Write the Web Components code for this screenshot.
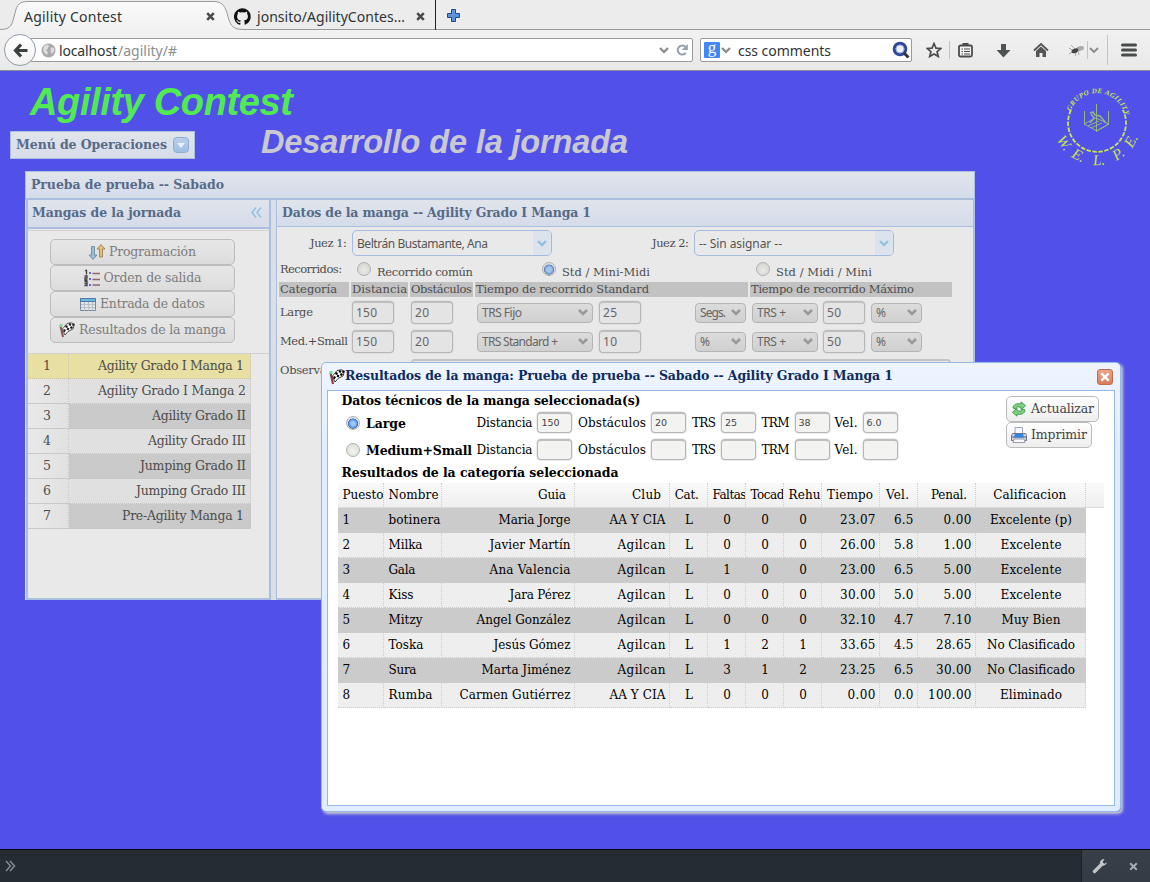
<!DOCTYPE html>
<html lang="es">
<head>
<meta charset="utf-8">
<title>Agility Contest</title>
<style>
html,body{margin:0;height:100%}
body{width:1150px;height:882px;overflow:hidden;display:flex;flex-direction:column;background:#5151ea;font:12px/16px "DejaVu Serif",serif;color:#000}
</style>
</head>
<body>
<browser-chrome></browser-chrome>
<contest-page></contest-page>
<dev-bar></dev-bar>
<script>
const define = (name, css, html) => {
  const tpl = document.createElement('template');
  const isFn = typeof html === 'function';
  if (!isFn) tpl.innerHTML = `<style>${css}</style>${html}`;
  customElements.define(name, class extends HTMLElement {
    connectedCallback() {
      if (this.shadowRoot) return;
      const root = this.attachShadow({mode: 'open'});
      if (isFn) root.innerHTML = `<style>${css}</style>${html(this)}`;
      else root.append(tpl.content.cloneNode(true));
    }
  });
};
/* text set to a given width */
const t = (w, s, css = '') => `<fit-text w="${w}" style="${css}">${s}</fit-text>`;
const chev = (c, w = 2.2, s = 10) => `<svg width="${s}" height="8" viewBox="0 0 10 8"><path d="M1 2l4 4 4-4" fill="none" stroke="${c}" stroke-width="${w}"/></svg>`;
const X = (s, c, w) => `<svg width="${s}" height="${s}" viewBox="0 0 9 9" style="display:block"><path d="M1.2 1.2l6.6 6.6M7.8 1.2L1.2 7.8" stroke="${c}" stroke-width="${w}"/></svg>`;

/* ---------- browser ---------- */
define('browser-tabs', `
:host{display:block;position:relative;height:30px;background:#ececec;font:14px/20px "Noto Sans",sans-serif;color:#2e3436}
.bg{position:absolute;left:0;top:0}
.row{position:relative;display:flex;align-items:center;height:30px;padding:4px 0 0 24px;box-sizing:border-box}
.sep{width:1px;height:30px;background:#222;margin:-4px 0 0 10px}
`, `
<svg class="bg" width="1150" height="30"><defs><linearGradient id="g" x2="0" y2="1"><stop offset="0" stop-color="#fafafa"/><stop offset="1" stop-color="#f1f1f1"/></linearGradient></defs>
<path d="M0 29.5C12 29.5 12 24 15 13C17 4 20 1.500 28 1.500H213C221 1.500 224 4 227 13C230 24 231 29.500 243 29.500V31H0z" fill="url(#g)"/>
<path d="M0 29.500C12 29.500 12 24 15 13C17 4 20 1.500 28 1.500H213C221 1.500 224 4 227 13C230 24 231 29.500 243 29.500H1150" fill="none" stroke="#9a9a9a"/></svg>
<div class="row">${t(98,'Agility Contest')}
<span style="margin:-2px 0 0 84px">${X(9,'#4a4c4a',2.6)}</span>
<svg style="margin:-2px 0 0 19px" width="17" height="17" viewBox="0 0 16 16"><path fill="#111" d="M8 .2a8 8 0 0 0-2.500 15.600c.4.100.500-.2.500-.4v-1.500c-2.200.500-2.700-.9-2.700-.9-.4-.9-.9-1.200-.9-1.200-.7-.5.1-.5.1-.5.8.1 1.200.8 1.200.8.7 1.200 1.900.9 2.300.7.1-.5.3-.9.500-1.100-1.800-.2-3.600-.9-3.600-4 0-.9.3-1.600.8-2.100-.1-.2-.4-1 .1-2.100 0 0 .7-.2 2.200.8a7.500 7.500 0 0 1 4 0c1.500-1 2.200-.8 2.200-.8.4 1.100.2 1.900.1 2.100.5.600.8 1.300.8 2.100 0 3.100-1.900 3.700-3.700 3.900.3.300.600.800.600 1.500v2.200c0 .2.100.500.500.4A8 8 0 0 0 8 .2z"/></svg>
<span style="margin-left:6px">${t(148,'jonsito/AgilityContes...')}</span>
<span style="margin:-2px 0 0 11px">${X(9,'#4a4c4a',2.6)}</span>
<span class="sep"></span>
<svg style="margin:-4px 0 0 11px" width="13" height="13"><path d="M4.500.5h4v4h4v4h-4v4h-4v-4h-4v-4h4z" fill="#5d92d6" stroke="#204a87"/></svg></div>`);

define('browser-toolbar', `
:host{display:block;height:41px;box-sizing:border-box;border-bottom:1px solid #8d8d99;background:linear-gradient(#f1f1f1,#e9e9e9);font:14px/20px "Noto Sans",sans-serif;color:#2e3436}
.row{display:flex;align-items:center;height:40px}
.back{width:30px;height:30px;border:1px solid #8e9bab;border-radius:50%;background:linear-gradient(#fff,#f2f2f2);margin-left:4px;z-index:1;display:flex;align-items:center;justify-content:center}
.url,.search{height:24px;box-sizing:border-box;border:1px solid #9a9a9a;background:#fff;border-radius:2px;display:flex;align-items:center}
.url{width:663px;margin-left:-6px;padding-left:10px}.search{width:212px;margin-left:7px;padding-left:3px}
.t{padding-top:2px;display:flex}
svg{display:block;flex:none}.s{width:1px;height:18px;background:#c3c3c3;flex:none}
.g{width:16px;height:16px;background:#4387fd;color:#fff;border-radius:1px;font:17px/11px "Liberation Serif",serif;text-align:center}
`, `
<div class="row"><div class="back"><svg width="15" height="15"><path d="M8 1.500L2.500 7.500 8 13.500M3 7.500h11.500" fill="none" stroke="#3c403f" stroke-width="3.200"/></svg></div>
<div class="url"><svg width="15" height="15"><circle cx="7.500" cy="7.500" r="7" fill="#a9a9a9"/><path d="M3 3l3-1.500 2 1-1 3-2 1.500 2 2-1 3-2.500-2L2 7zM10 4l3 1 .5 3-3 3-1-3z" fill="#ddd"/></svg>
<span class="t" style="margin-left:3px">${t(58,'localhost')}${t(59,'/agility/#','margin-left:1px;color:#8b8e8f')}</span>
<span style="margin-left:482px">${chev('#8a8a8a')}</span>
<svg style="margin-left:7px" width="13" height="14" viewBox="0 0 13 14"><path d="M9.800 9.800A4.500 4.500 0 1 1 9.500 4" fill="none" stroke="#94a0ac" stroke-width="2"/><path d="M11.800 1v6h-6z" fill="#94a0ac"/></svg></div>
<div class="search"><span class="g">g</span><span style="margin-left:1px">${chev('#8a8a8a')}</span>
<span class="t" style="margin-left:7px">${t(93,'css comments')}</span>
<svg style="margin-left:61px" width="18" height="18"><circle cx="8" cy="8" r="5.800" fill="#eef2fb" stroke="#2e479a" stroke-width="3"/><circle cx="8" cy="8" r="4" fill="none" stroke="#93a8de"/><path d="M12 12l4.500 4.500" stroke="#333" stroke-width="3"/></svg></div>
<svg style="margin-left:14px" width="16" height="16" viewBox="0 0 16 16"><path d="M8 1.500l2 4.600 4.800.4-3.700 3.200 1.200 4.800L8 12l-4.300 2.500 1.200-4.800L1.200 6.500 6 6.100z" fill="none" stroke="#4a4d4c" stroke-width="1.700"/></svg>
<span class="s" style="margin-left:7px"></span>
<svg style="margin-left:8px" width="15" height="16"><rect x="1" y="3.500" width="13" height="11" rx="1.500" fill="#f4f4f4" stroke="#4a4d4c" stroke-width="1.800"/><path d="M4.500 1h6v3h-6z" fill="#4a4d4c"/><path d="M3.500 7H5M6 7h6M3.500 9.500H5M6 9.500h6M3.500 12H5M6 12h6" stroke="#4a4d4c" stroke-width="1.100"/></svg>
<svg style="margin-left:23px" width="15" height="15"><path d="M5 1h5v6h4.500l-7 7.500-7-7.500H5z" fill="#4f5351"/></svg>
<svg style="margin-left:22px" width="16" height="16"><path d="M1 8.500L8 2l7 6.500" fill="none" stroke="#555" stroke-width="1.800"/><path d="M3 9l5-4.600L13 9v6H9.500v-4h-3v4H3z" fill="#555"/></svg>
<svg style="margin-left:19px" width="16" height="15"><g stroke="#aaa" stroke-width="1"><path d="M1 5l5 3M1 11l5-3M7 13l2-6M11 12l-1-5M3 2l4 4"/></g><ellipse cx="12" cy="5.500" rx="4" ry="2.300" fill="#aaa" transform="rotate(-15 12 5)"/><ellipse cx="7" cy="7.800" rx="3.500" ry="2.200" fill="#444" transform="rotate(-20 7 8)"/></svg>
<span class="s" style="margin-left:3px"></span><span style="margin-left:1px">${chev('#8a8a8a',1.8)}</span>
<span class="s" style="margin-left:8px;height:30px"></span>
<svg style="margin-left:13px" width="16" height="14"><path d="M1.500 2h13M1.500 7h13M1.500 12h13" stroke="#484c4b" stroke-width="3" stroke-linecap="round"/></svg>
</div>`);

define('browser-chrome', `:host{display:block;flex:none;height:71px}`, `<browser-tabs></browser-tabs><browser-toolbar></browser-toolbar>`);

define('dev-bar', `
:host{display:flex;flex:none;height:33px;box-sizing:border-box;border-top:1px solid #05070f;background:#252c33;align-items:center;justify-content:space-between}
.l{margin-left:5px}.r{width:69px;height:32px;box-sizing:border-box;background:linear-gradient(#373f48,#333b44);border-left:1px solid #1b2026;display:flex;align-items:center;padding-left:10px}
svg{display:block}`, `
<svg class="l" width="11" height="12"><path d="M1 1l4.500 5L1 11M5 1l4.500 5L5 11" fill="none" stroke="#858b92" stroke-width="1.500"/></svg>
<div class="r"><svg width="16" height="16" viewBox="0 0 16 16"><path d="M2.500 13.500L9.500 6.500" stroke="#c2c6c9" stroke-width="3.400" stroke-linecap="round"/><path d="M12.500 1A4.200 4.200 0 0 0 8 6.500 4.200 4.200 0 0 0 15 4.300l-2.700 1.400-1.700-1.500z" fill="#c2c6c9"/></svg>
<span style="margin-left:21px">${X(9,'#a6acb1',2)}</span></div>`);

/* ---------- icons ---------- */
const icons = {
  sort: `<path d="M2.500 2.500h3v8.500h2.500L4 15.500 0 11h2.500z" fill="#8db8d3" stroke="#577f9b" stroke-width=".9"/><path d="M10.500 13V5H8l4-4.500L16 5h-2.500v8z" fill="#e2bb67" stroke="#927034" stroke-width=".9"/>`,
  list: `<path d="M1 .5h1.500v4M.5 6h2.500v2H1v2h2.500M.5 11.500h2.500v4H.5m0-2h2" fill="none" stroke="#222" stroke-width="1.300"/><path d="M5 2h2v2H5zM5 8h2v2H5zM5 14h2v2H5z" fill="#5555dd"/><path d="M8.500 3.500h7.500M8.500 9.500h7.500M8.500 15h7.500" stroke="#874e5e" stroke-width="1.700"/>`,
  table: `<path d="M.5 2.500h15v12H.5z" fill="#e5e5e5" stroke="#627b9a"/><path d="M4.500 2.500v12M8.500 2.500v12M12.500 2.500v12M1 8.500h14M1 11.500h14" stroke="#b2bac4" fill="none"/><path d="M.5 2.500h15v3H.5z" fill="#59b3de" stroke="#36649d"/>`,
  flag: `<path d="M1.500 4L4 15" stroke="#82383d" stroke-width="2"/><path d="M.5 2h3v3h-3z" fill="#74d884"/><path d="M4 6.500L8 1.500 12 .8 15.500 2 14 7 9 9.500 6 13 3.500 8z" fill="#fff" stroke="#111" stroke-width=".8"/><path d="M7 3l2 1-1 2-2-1zM10.500 1l2 1-1 2-2-1zM5 7l2 1-1.500 2.500-1.300-2zM8.500 5.500l2 1-1 2-2-1zM12 4l2 1-1.200 2-2-1zM13.500 1.500l2 1-1 1.500-1.500-.5z" fill="#000"/>`,
  reload: `<path d="M2 7C2 3.500 6 2 10 3V.8l4.500 4-4.500 4V6.500C7 5.500 5 5.500 4.500 8z" fill="#83cf80" stroke="#329943" stroke-width=".9"/><path d="M14 9c0 3.500-4 5-8 4v2.200l-4.500-4L6 7.200v2.300c3 1 5 1 5.500-1.500z" fill="#83cf80" stroke="#329943" stroke-width=".9"/>`,
  print: `<path d="M4 .5h7.500v6H4z" fill="#f8f8fb" stroke="#9aa5b8"/><path d="M1.500 6.500h13l1 2v5h-15v-5z" fill="#d0d3df" stroke="#6e7487"/><path d="M1 10h14" stroke="#5a6073"/><path d="M4 7h8l1 3.500H3z" fill="#2b86e3"/><path d="M3 12h10l1 3.500H2z" fill="#fafafa" stroke="#999faf"/>`
};
define('ui-icon', `:host{display:block;width:16px;height:16px;flex:none}svg{display:block;overflow:visible}`, e => `<svg width="16" height="16" viewBox="0 0 16 16">${icons[e.getAttribute('name')]}</svg>`);

/* ---------- controls ---------- */
define('link-button', `:host{display:flex;align-items:center;justify-content:center;height:26px;box-sizing:border-box;border:1px solid var(--bd,#bbb);border-radius:5px;background:linear-gradient(var(--c1,#fff),var(--c2,#eee));font-size:12.500px;color:var(--fg,#444);gap:4px}`, `<slot></slot>`);
define('text-box', `:host{display:block;box-sizing:border-box;height:23px;border:1px solid #b6b6b6;border-top-width:2px;border-top-color:#bebebe;border-radius:4px;background:var(--bg,#e4e4e4);box-shadow:0 0 0 1px var(--ol,#dfdfdf);padding-left:3px;font:12px/20px "Noto Sans",sans-serif;color:#666}`, `<slot></slot>`);
define('native-select', `:host{display:flex;box-sizing:border-box;height:20px;border:1px solid #b4b4b4;border-radius:4px;background:linear-gradient(#dcdcdc,#d0d0d0);align-items:center;justify-content:space-between;padding:1px 4px 0;font:12px/16px "Noto Sans",sans-serif;color:#666}svg{margin-top:-3px}`, `<slot></slot>${chev('#999',2.600)}`);
define('combo-box', `:host{display:flex;box-sizing:border-box;width:200px;height:26px;border:1px solid #a3bbde;border-radius:5px;overflow:hidden;align-items:center;justify-content:space-between;padding-left:4px;font:12px/14px "Noto Sans",sans-serif;color:#555}.a{width:18px;height:24px;display:flex;align-items:center;justify-content:center;background:#dce3ec}::slotted(*){margin-top:2px}`, `<slot></slot><span class="a">${chev('#8fc2e4',2.400)}</span>`);
define('radio-dot', `:host{display:block;flex:none;width:14px;height:14px;box-sizing:border-box;border-radius:50%;border:1px solid #b0b0ab;background:radial-gradient(circle at 50% 60%,#f4f4f2,#d8d8d4)}
:host([on]){background:radial-gradient(circle at 50% 55%,#9cc6fb 0 2px,#5b96e2 4px,#3c68b0 4.800px,#e3e6ea 5.400px)}
:host([dim]){background:radial-gradient(circle at 50% 60%,#e9e9e6,#d0d0cc)}
:host([dim][on]){background:radial-gradient(circle at 50% 55%,#a8c6ea 0 2px,#7ca6dc 4px,#617fae 4.800px,#dde0e4 5.400px)}`, ``);

define('panel-header', `:host{display:flex;align-items:center;box-sizing:border-box;background:linear-gradient(#e0e4ea,#d5dcea);color:#566a89;font-weight:bold;font-size:12.500px;padding:0 9px 0 5px;justify-content:space-between}`, `<slot></slot>`);

/* ---------- left panel ---------- */
define('mangas-list', `
:host{display:block}.r{display:flex;width:223px;height:25px;line-height:24px;color:#4d4d4d;font-size:12.500px}
.n{width:41px;box-sizing:border-box;border-right:1px dotted #c4c4c4;border-bottom:1px solid #c9c9c9;display:flex;justify-content:center;padding-right:2px;background:linear-gradient(90deg,#e9e9e9,#e1e1e1)}
.c{flex:1;box-sizing:border-box;border-right:1px dotted #c4c4c4;border-bottom:1px dotted #c4c4c4;display:flex;justify-content:flex-end;padding-right:4px;background:#e0e0e0}
.odd .c{background:#cacaca}.sel .n,.sel .c{background:#e8dfa2;border-bottom:1px dotted #ccc49c}.sel .c,.last .c{padding-right:6px}`,
() => [['Agility Grado I Manga 1',146,'sel'],['Agility Grado I Manga 2',148,''],['Agility Grado II',94,'odd'],['Agility Grado III',98,''],['Jumping Grado II',106,'odd'],['Jumping Grado III',110,''],['Pre-Agility Manga 1',122,'odd last']]
 .map(([s,w,c],i) => `<div class="r ${c}"><div class="n">${t(7,i+1)}</div><div class="c">${t(w,s)}</div></div>`).join(''));

define('mangas-panel', `
:host{display:flex;flex-direction:column;width:245px;box-sizing:border-box;border:2px solid #a9bfdd;border-top:0;background:#e9e9e9}
panel-header{height:29px;border-bottom:2px solid #a9bfdd;padding:0 7px 2px 4px}
.tools{border-top:1px solid #d4d4d4;border-bottom:1px solid #d0d0d0;margin-top:1px;padding:8px 34px 9px 22px;height:124px;box-sizing:border-box;--bd:#bdbdbd;--c1:#e7e7e7;--c2:#dcdcdc;--fg:#7d7d7d}
ui-icon{opacity:.85}`, `
<panel-header>${t(149,'Mangas de la jornada')}<svg width="11" height="11"><path d="M5 .5L1 5.500l4 5M10 .5L6 5.500l4 5" fill="none" stroke="#8fc2e4" stroke-width="1.500"/></svg></panel-header>
<div class="tools"><link-button><ui-icon name="sort"></ui-icon>${t(87,'Programación')}</link-button>
<link-button><ui-icon name="list"></ui-icon>${t(98,'Orden de salida')}</link-button>
<link-button><ui-icon name="table"></ui-icon>${t(105,'Entrada de datos')}</link-button>
<link-button><ui-icon name="flag"></ui-icon>${t(147,'Resultados de la manga')}</link-button></div>
<mangas-list></mangas-list>`);

/* ---------- right panel ---------- */
define('manga-form', `
:host{display:block;color:#4d4d4d;font-size:11.500px}
.row{display:flex;align-items:center}
.th{display:flex;gap:2px;height:15px;margin-left:2px}.th>div{background:#c2c2c2;padding-left:1px;line-height:15px;box-sizing:border-box;white-space:nowrap}
.in{width:42px;flex:none}native-select,combo-box{flex:none}.lab{width:75px;padding:0 0 1px 3px;box-sizing:border-box;flex:none}
.area{margin-left:53px;width:540px;height:60px;box-sizing:border-box;border:2px solid #c4c4c4;border-radius:4px}
`, () => {
  const line = (lab, lw, a, d, f) => `<div class="row" style="height:29px"><div class="lab">${t(lw,lab)}</div><text-box class="in">${t(21,'150')}</text-box><text-box class="in" style="margin-left:17px">${t(14,'20')}</text-box>
<native-select style="margin-left:24px;width:116px">${a}</native-select><text-box class="in" style="margin-left:6px">${t(14,d)}</text-box>
<native-select style="margin-left:54px;width:51px">${f}</native-select><native-select style="margin-left:6px;width:66px">${t(29,'TRS +')}</native-select><text-box class="in" style="margin-left:5px">${t(14,'50')}</text-box><native-select style="margin-left:6px;width:51px">${t(7,'%')}</native-select></div>`;
  return `
<div class="row" style="height:32px"><span style="margin-left:33px">${t(37,'Juez 1:')}</span><combo-box style="margin-left:5px">${t(131,'Beltrán Bustamante, Ana')}</combo-box>
<span style="margin-left:100px">${t(37,'Juez 2:')}</span><combo-box style="margin-left:5px">${t(83,'-- Sin asignar --')}</combo-box></div>
<div class="row" style="height:23px"><span style="margin:-4px 0 0 3px">${t(62,'Recorridos:')}</span><radio-dot dim style="margin:-4px 0 0 15px"></radio-dot><span style="margin:3px 0 0 6px">${t(96,'Recorrido común')}</span>
<radio-dot dim on style="margin:-4px 0 0 69px"></radio-dot><span style="margin:3px 0 0 6px">${t(88,'Std / Mini-Midi')}</span><radio-dot dim style="margin:-4px 0 0 106px"></radio-dot><span style="margin:3px 0 0 6px">${t(96,'Std / Midi / Mini')}</span></div>
<div class="th"><div style="width:70px">${t(57,'Categoría')}</div><div style="width:57px">${t(55,'Distancia')}</div><div style="width:63px">${t(61,'Obstáculos')}</div><div style="width:273px">${t(173,'Tiempo de recorrido Standard')}</div><div style="width:202px">${t(163,'Tiempo de recorrido Máximo')}</div></div>
<div style="height:1px"></div>
${line('Large',33,t(40,'TRS Fijo'),'25',t(26,'Segs.'))}${line('Med.+Small',68,t(76,'TRS Standard +'),'10',t(7,'%'))}
<div class="row" style="align-items:flex-start;padding-top:3px"><span style="margin:3px 0 0 3px;width:78px">${t(82,'Observaciones')}</span><div class="area"></div></div>`;
});

define('manga-panel', `
:host{display:block;flex:1;box-sizing:border-box;border:1px solid #a9bfdd;border-top:0;border-bottom:2px solid #a9bfdd;border-right-width:2px;background:#e9e9e9;overflow:hidden}
panel-header{height:27px;border-bottom:1px solid #a9bfdd}`, `
<panel-header>${t(309,'Datos de la manga -- Agility Grado I Manga 1')}</panel-header><manga-form></manga-form>`);

define('jornada-panel', `
:host{display:flex;flex-direction:column;width:950px;height:429px;box-sizing:border-box;background:#dbe0e8}
.top{height:29px;border:1px solid #a9bfdd;border-bottom-width:2px}
.body{display:flex;flex:1;gap:5px;padding-left:1px}`, `
<panel-header class="top">${t(193,'Prueba de prueba -- Sabado')}</panel-header>
<div class="body"><mangas-panel></mangas-panel><manga-panel></manga-panel></div>`);

/* ---------- page heading ---------- */
define('welpe-logo', `:host{display:block;width:100px;height:100px}svg{display:block;overflow:visible}text{font-family:"Liberation Serif",serif;font-style:italic;fill:#c8e64a}`, () => {
  const L = [['W.',-56],['E.',-28],['L.',3],['P.',33],['E.',60]];
  return `<svg width="100" height="100"><defs><path id="arc" d="M23 46a28.500 28.500 0 0 1 56.500 2"/></defs>
<path d="M25 39A29 29 0 1 0 77 39" fill="none" stroke="#c9e74b" stroke-width="1.800" stroke-dasharray="4.500 1.500"/>
<text style="font-size:7px;font-weight:bold"><textPath href="#arc" startOffset="6" textLength="72">GRUPO DE AGILITY</textPath></text>
${L.map(([s,a]) => `<text style="font-size:15px" text-anchor="middle" transform="translate(51 50) rotate(${-a}) translate(0 44)">${s}</text>`).join('')}
<g fill="none" stroke="#93b77c" stroke-width="1"><path d="M38.500 40v14M50.500 33v18M62.500 40v14M38 53l13 7M38 53l12-6 13 6-12 7M42 55l11-5M45 57l11-5M50.500 52v9M62.500 53l-12 7"/><path d="M44 42l3-1 2 3 5 1 6 7M45 43l3 4-4 5" stroke-width="1.500"/></g></svg>`;
});
define('menu-box', `:host{display:flex;align-items:center;box-sizing:border-box;width:185px;height:28px;border:1px solid #a9bfdd;background:linear-gradient(#e0e4ea,#d7dde9);color:#566a89;font-weight:bold;font-size:12.500px;padding-left:5px;gap:6px}
i{width:16px;height:16px;box-sizing:border-box;border:1px solid #8eaed5;border-radius:4px;background:linear-gradient(#b9cfe9,#9fc0e4);display:flex;align-items:center;justify-content:center}`,
`${t(151,'Menú de Operaciones')}<i><svg width="8" height="5"><path d="M0 0h8L4 5z" fill="#eef1f5"/></svg></i>`);

define('page-heading', `
:host{display:grid;height:100px;grid-template-columns:1046px 100px;font-family:"Liberation Sans",sans-serif}
h1,h2{margin:0;font-weight:bold;font-style:italic}
h1{font-size:38px;line-height:44px;color:#51ea51;margin:9px 0 0 30px}
h2{font-size:32.500px;line-height:36px;color:#c9c9cf;margin:-7px 0 0 66px}
.b{display:flex;align-items:flex-start;margin:7px 0 0 10px}menu-box{font-family:"DejaVu Serif",serif}`, `
<div><h1>${t(263,'Agility Contest')}</h1><div class="b"><menu-box></menu-box><h2>${t(367,'Desarrollo de la jornada')}</h2></div></div><welpe-logo></welpe-logo>`);

/* ---------- results dialog ---------- */
define('results-grid', `
:host{display:block;width:766px;font-size:12px}
.r{display:grid;grid-template-columns:46px 58px 133px 95px 38px 38px 38px 38px 58px 38px 58px 110px;height:25px;width:748px}
.h{width:766px;background:linear-gradient(#fafafa,#efefef);box-sizing:border-box;border-bottom:1px solid #dcdcdc}
.r>div{box-sizing:border-box;border-right:1px dotted #ccc;border-bottom:1px dotted #ccc;padding:0 3.500px 0 4.500px;display:flex;overflow:hidden;line-height:24px}
.h>div{border-bottom:0}.e{justify-content:flex-end}.m{justify-content:center}
.d{background:#cbcbcb}.l{background:#eee}`, () => {
  const al = ['','','e','e','m','m','m','m','e','e','e','m'];
  const H = [['Puesto',41],['Nombre',50],['Guia',28],['Club',29],['Cat.',24],['Faltas',34],['Tocad',34],['Rehu',32],['Tiempo',46],['Vel.',23],['Penal.',36],['Calificacion',73]];
  const C = [['botinera',52],['Milka',34],['Gala',27],['Kiss',25],['Mitzy',34],['Toska',35],['Sura',28],['Rumba',44]];
  const G = [['Maria Jorge',72],['Javier Martín',81],['Ana Valencia',81],['Jara Pérez',61],['Angel González',94],['Jesús Gómez',77],['Marta Jiménez',89],['Carmen Gutiérrez',111]];
  const D = [['0','0','0','23.07','6.5','0.00'],['0','0','0','26.00','5.8','1.00'],['1','0','0','23.00','6.5','5.00'],['0','0','0','30.00','5.0','5.00'],['0','0','0','32.10','4.7','7.10'],['1','2','1','33.65','4.5','28.65'],['3','1','2','23.25','6.5','30.00'],['0','0','0','0.00','0.0','100.00']];
  const K = [['Excelente (p)',82],['Excelente',61],['Excelente',61],['Excelente',61],['Muy Bien',59],['No Clasificado',88],['No Clasificado',88],['Eliminado',62]];
  const nw = s => ({1:7.500,3:19.500,4:28,5:35.500,6:43.500})[s.length];
  const pad = {2:8,3:8,4:8,5:0,6:0,7:0,8:6,9:8,10:8,11:6};
  const head = H.map(([s,w],i) => `<div class="${i>4&&i<8?'':al[i]}" style="${i in pad?`padding-right:${pad[i]}px`:''}">${t(w,s)}</div>`).join('');
  return `<div class="r h">${head}</div>` + C.map((c,i) => {
    const cells = [[String(i+1),7.500], c, G[i], i==0||i==7?['AA Y CIA',56]:['Agilcan',48], ['L',8], ...D[i].map(s => [s,nw(s)]), K[i]];
    return `<div class="r ${i%2?'l':'d'}">${cells.map(([s,w],j) => `<div class="${al[j]}">${t(w,s)}</div>`).join('')}</div>`;
  }).join('');
});

define('tech-row', `
:host{display:flex;align-items:center;height:27px;--bg:#f3f3f1;--ol:#ececec}
b{width:105px;margin-left:6px;padding-top:2px;font-size:12.500px}
.i{width:35px;height:21px;box-sizing:border-box;flex:none;margin:0 5px;font:9.500px/18px "DejaVu Sans",sans-serif;color:#444}`, e => {
  const v = (e.getAttribute('values') || ',,,,').split(','), n = [18,12,12,12,15];
  return `<radio-dot ${e.hasAttribute('on')?'on':''}></radio-dot><b>${t(e.getAttribute('lw'),e.getAttribute('label'))}</b>` +
   [['Distancia',56],['Obstáculos',68],['TRS',24],['TRM',28],['Vel.',23]].map(([s,w],i) => `<span style="margin-left:${[5.500,0.500,1,0.500,0][i]}px">${t(w,s)}</span><text-box class="i">${v[i]?t(n[i],v[i]):''}</text-box>`).join('');
});

define('results-dialog', `
:host{display:block;position:absolute;left:321px;top:291px;width:800px;height:450px;box-sizing:border-box;border:1px solid #95b8e7;border-radius:5px;background:linear-gradient(#eff5ff,#e0ecff 20%);box-shadow:2px 2px 3px #ccc}
.t{display:flex;align-items:center;height:27px;padding:0 7px;box-sizing:border-box;color:#0e2d5f;font-weight:bold;font-size:12.500px}
.t fit-text{margin-top:-1px}
.x{margin-left:auto;width:16px;height:16px;box-sizing:border-box;border:1px solid #c06c50;border-radius:3px;background:linear-gradient(#e8a688,#d97d5c);display:flex;align-items:center;justify-content:center}
.c{margin:0 5px;width:788px;height:416px;box-sizing:border-box;border:1px solid #95b8e7;background:#fff;overflow:hidden;display:grid;grid-template-columns:678px 1fr;grid-template-rows:92px 1fr}
.top{padding:1px 0 0 13.500px}h3{margin:0;font-size:12.500px;line-height:18px;font-weight:bold}
tech-row{margin:-1px 0 1px 4.500px}
.btn{padding-top:5px}.g{grid-column:1/3;padding-left:10px}`, `
<div class="t"><ui-icon name="flag"></ui-icon>${t(548,'Resultados de la manga: Prueba de prueba -- Sabado -- Agility Grado I Manga 1')}<span class="x">${X(10,'#fff',2.300)}</span></div>
<div class="c"><div class="top"><h3>${t(299,'Datos técnicos de la manga seleccionada(s)')}</h3>
<tech-row label="Large" lw="40" on values="150,20,25,38,6.0"></tech-row>
<tech-row label="Medium+Small" lw="106" style="margin-top:-1px"></tech-row>
<h3>${t(277,'Resultados de la categoría seleccionada')}</h3></div>
<div class="btn"><link-button style="width:93px">
<ui-icon name="reload"></ui-icon>${t(63,'Actualizar')}</link-button><link-button style="width:86px"><ui-icon name="print"></ui-icon>${t(56,'Imprimir')}</link-button></div>
<div class="g"><results-grid></results-grid></div></div>`);

define('contest-page', `:host{display:block;position:relative;flex:1;background:#5151ea}jornada-panel{margin-left:25px}`,
 `<page-heading></page-heading><jornada-panel></jornada-panel><results-dialog></results-dialog>`);

/* spreads its slotted text over w pixels by letter spacing */
customElements.define('fit-text', class extends HTMLElement {
  connectedCallback() {
    if (this.shadowRoot) return;
    this.attachShadow({mode: 'open'}).innerHTML = '<style>:host{display:inline-block;white-space:nowrap;flex:none}span{display:inline-block}</style><span><slot></slot></span>';
    const s = this.shadowRoot.querySelector('span'), w = +this.getAttribute('w'), n = this.textContent.length;
    const d = w - s.getBoundingClientRect().width;
    if (n > 1) { s.style.letterSpacing = d / (n - 1) + 'px'; s.style.marginRight = -d / (n - 1) + 'px'; }
  }
});
</script>
</body>
</html>
